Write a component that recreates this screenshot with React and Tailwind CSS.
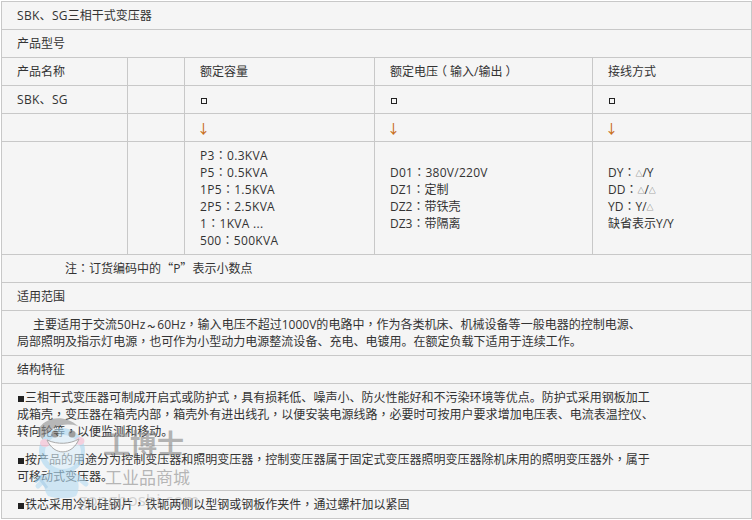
const font = { fontFamily: '"Open Sans", "Noto Sans CJK SC", sans-serif' };
const tc = { fontFamily: '"Noto Sans CJK TC", sans-serif' };
const sc = { fontFamily: '"Noto Sans CJK SC", sans-serif' };

function t(str) {
  return [...str].map((c, i) => {
    if ("：，".includes(c)) return <span key={i} className="leading-[0]" style={tc}>{c}</span>;
    if (c === "（") return <span key={i} className="leading-[0] relative -left-[3px]" style={tc}>{c}</span>;
    if (c === "）") return <span key={i} className="leading-[0] relative left-[3px]" style={tc}>{c}</span>;
    if ("“”".includes(c)) return <span key={i} className="leading-[0]" style={sc}>{c}</span>;
    if (c === "～") return <span key={i} className="leading-[0] text-[8px] font-bold px-[2px]" style={sc}>{c}</span>;
    return c;
  });
}

function Cell({ children, colSpan, className = "" }) {
  return (
    <td colSpan={colSpan} className={"border border-[#c8c8c8] px-[15px] py-[5px] align-top " + className}>
      {typeof children === "string" ? t(children) : children}
    </td>
  );
}

function Lines({ items }) {
  return items.map((s, i) => <div key={i}>{t(s)}</div>);
}

const Sq = () => <span className="inline-block w-[6px] h-[6px] border border-[#222] align-[0px] ml-[1px]" />;
const Arrow = () => (
  <div className="h-[17px] leading-[17px]">
    <span className="inline-block h-[17px] text-[13px] leading-[17px] font-medium text-[#c9701a] -ml-[3px]" style={sc}>
      ↓
    </span>
  </div>
);
const Tri = () => (
  <span className="inline-block w-[7px] text-center text-[7px] leading-[0] align-[1px] text-[#444]" style={sc}>△</span>
);
const Bul = () => <span className="inline-block w-[6px] h-[6px] bg-[#222] mr-[1px] ml-[1px]" />;

function Watermark() {
  return (
    <div className="absolute left-[34px] top-[416px] w-[160px] h-[96px] pointer-events-none">
      <svg width="60" height="84" viewBox="0 0 60 84" className="absolute left-0 top-0 opacity-60">
        <path d="M3 16 C10 0 30 -2 44 10 C30 6 16 10 9 24 Z" fill="#8f8f8f" />
        <path d="M16 54 C10 62 8 72 14 80 C22 83 36 83 42 80 C47 72 44 62 40 54 Z" fill="#b5dcf3" />
        <path d="M14 60 L4 70 M42 60 L52 68" stroke="#b5dcf3" strokeWidth="5" strokeLinecap="round" />
        <path d="M4 60 L13 72 M1 66 L9 59" stroke="#8fc3e6" strokeWidth="3" />
        <circle cx="28" cy="35" r="23" fill="#a9d6f1" />
        <ellipse cx="29" cy="36" rx="18" ry="17" fill="#d9eefa" />
        <ellipse cx="11" cy="27" rx="5" ry="4" fill="#f4b8cf" />
        <ellipse cx="46" cy="25" rx="4.5" ry="4" fill="#f4b8cf" />
        <circle cx="21" cy="18" r="3.5" fill="#666" />
        <circle cx="38" cy="18" r="3.5" fill="#666" />
        <path d="M13 24 C20 40 38 40 45 23 C36 28 24 29 13 24 Z" fill="#fff" stroke="#777" strokeWidth="1" />
      </svg>
      <div className="absolute left-[69px] top-[11px] text-[27px] leading-[32px] font-bold text-[#8a8a8a]/65 whitespace-nowrap" style={sc}>
        工博士
      </div>
      <div className="absolute left-[71px] top-[51px] text-[17px] leading-[20px] text-[#8a8a8a]/60 whitespace-nowrap" style={sc}>
        工业品商城
      </div>
      <div className="absolute left-[44px] top-[74px] text-[17px] leading-[20px] text-[#9a9a9a]/40 whitespace-nowrap">
        gongboshi.com
      </div>
    </div>
  );
}

export default function App() {
  return (
    <div className="relative w-[752px] h-[520px] bg-white overflow-hidden text-[12px] leading-[17px] text-[#333]" style={font}>
      <table className="border-collapse table-fixed w-[750px] ml-[1px] mt-[1px] bg-[#f5f5f5]">
        <colgroup>
          <col className="w-[126px]" />
          <col className="w-[57px]" />
          <col className="w-[190px]" />
          <col className="w-[218px]" />
          <col className="w-[159px]" />
        </colgroup>
        <tbody>
          <tr><Cell colSpan={5}><span className="tracking-[0.3px]">SBK、SG</span>三相干式变压器</Cell></tr>
          <tr><Cell colSpan={5}>产品型号</Cell></tr>
          <tr>
            <Cell>产品名称</Cell>
            <Cell />
            <Cell>额定容量</Cell>
            <Cell>额定电压（输入/输出）</Cell>
            <Cell>接线方式</Cell>
          </tr>
          <tr>
            <Cell><span className="tracking-[0.3px]">SBK、SG</span></Cell>
            <Cell />
            <Cell><Sq /></Cell>
            <Cell><Sq /></Cell>
            <Cell><Sq /></Cell>
          </tr>
          <tr>
            <Cell><div className="h-[17px]" /></Cell>
            <Cell />
            <Cell><Arrow /></Cell>
            <Cell><Arrow /></Cell>
            <Cell><Arrow /></Cell>
          </tr>
          <tr>
            <Cell />
            <Cell />
            <Cell className="tracking-[0.3px]"><Lines items={["P3：0.3KVA", "P5：0.5KVA", "1P5：1.5KVA", "2P5：2.5KVA", "1：1KVA ...", "500：500KVA"]} /></Cell>
            <Cell className="!align-middle">
              <div className="tracking-[0.25px]">{t("D01：380V/220V")}</div>
              <Lines items={["DZ1：定制", "DZ2：带铁壳", "DZ3：带隔离"]} />
            </Cell>
            <Cell className="!align-middle">
              <div>{t("DY：")}<Tri />/Y</div>
              <div>{t("DD：")}<Tri />/<Tri /></div>
              <div>{t("YD：")}Y/<Tri /></div>
              <div>缺省表示Y/Y</div>
            </Cell>
          </tr>
          <tr><Cell colSpan={5} className="!pl-[63px]">注：订货编码中的“P”表示小数点</Cell></tr>
          <tr><Cell colSpan={5}>适用范围</Cell></tr>
          <tr>
            <Cell colSpan={5}>
              <div className="indent-[16px]">{t("主要适用于交流50Hz～60Hz，输入电压不超过1000V的电路中，作为各类机床、机械设备等一般电器的控制电源、")}</div>
              <div>{t("局部照明及指示灯电源，也可作为小型动力电源整流设备、充电、电镀用。在额定负载下适用于连续工作。")}</div>
            </Cell>
          </tr>
          <tr><Cell colSpan={5}>结构特征</Cell></tr>
          <tr>
            <Cell colSpan={5}>
              <div><Bul />{t("三相干式变压器可制成开启式或防护式，具有损耗低、噪声小、防火性能好和不污染环境等优点。防护式采用钢板加工")}</div>
              <div>{t("成箱壳，变压器在箱壳内部，箱壳外有进出线孔，以便安装电源线路，必要时可按用户要求增加电压表、电流表温控仪、")}</div>
              <div>{t("转向轮等，以便监测和移动。")}</div>
            </Cell>
          </tr>
          <tr>
            <Cell colSpan={5}>
              <div><Bul />{t("按产品的用途分为控制变压器和照明变压器，控制变压器属于固定式变压器照明变压器除机床用的照明变压器外，属于")}</div>
              <div>可移动式变压器。</div>
            </Cell>
          </tr>
          <tr>
            <Cell colSpan={5}>
              <div><Bul />{t("铁芯采用冷轧硅钢片，铁轭两侧以型钢或钢板作夹件，通过螺杆加以紧固")}</div>
            </Cell>
          </tr>
        </tbody>
      </table>
      <Watermark />
    </div>
  );
}
